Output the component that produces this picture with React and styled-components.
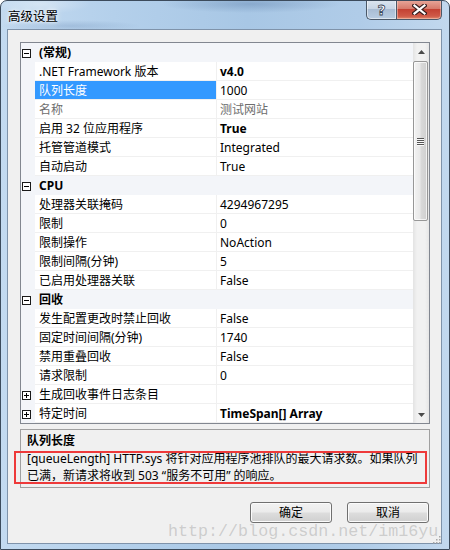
import React from 'react';
import styled, { createGlobalStyle } from 'styled-components';

const sections = [
    {
        title: '(常规)',
        items: [
            { name: '.NET Framework 版本', value: 'v4.0', bold: true },
            { name: '队列长度', value: '1000', selected: true },
            { name: '名称', value: '测试网站', disabled: true },
            { name: '启用 32 位应用程序', value: 'True', bold: true },
            { name: '托管管道模式', value: 'Integrated' },
            { name: '自动启动', value: 'True' },
        ],
    },
    {
        title: 'CPU',
        items: [
            { name: '处理器关联掩码', value: '4294967295' },
            { name: '限制', value: '0' },
            { name: '限制操作', value: 'NoAction' },
            { name: '限制间隔(分钟)', value: '5' },
            { name: '已启用处理器关联', value: 'False' },
        ],
    },
    {
        title: '回收',
        items: [
            { name: '发生配置更改时禁止回收', value: 'False' },
            { name: '固定时间间隔(分钟)', value: '1740' },
            { name: '禁用重叠回收', value: 'False' },
            { name: '请求限制', value: '0' },
            { name: '生成回收事件日志条目', value: '', expandable: true },
            { name: '特定时间', value: 'TimeSpan[] Array', bold: true, expandable: true },
        ],
    },
];

const Expander = ({ open }) => (
    <svg width="9" height="9" viewBox="0 0 9 9">
        <rect x="0.5" y="0.5" width="8" height="8" fill="#fff" stroke="#1a1a1a" />
        <line x1="2" y1="4.5" x2="7" y2="4.5" stroke="#000" />
        {!open && <line x1="4.5" y1="2" x2="4.5" y2="7" stroke="#000" />}
    </svg>
);

const Arrow = ({ down }) => (
    <svg width="7" height="4" viewBox="0 0 7 4">
        <polygon points={down ? '0,0 7,0 3.5,4' : '0,4 7,4 3.5,0'} fill="#4a4a4a" />
    </svg>
);

const App = () => {
    return (
        <>
            <GlobalStyle />
            <Window>
                <TitleBar>
                    <Title>高级设置</Title>
                    <CaptionButtons>
                        <HelpButton>?</HelpButton>
                        <CloseButton>
                            <svg width="15" height="11" viewBox="0 0 15 11">
                                <path d="M2.5 1.5 L12.5 9.5 M12.5 1.5 L2.5 9.5" stroke="#3b2020" strokeWidth="4.5" strokeLinecap="square" />
                                <path d="M2.5 1.5 L12.5 9.5 M12.5 1.5 L2.5 9.5" stroke="#fff" strokeWidth="2.2" strokeLinecap="square" />
                            </svg>
                        </CloseButton>
                    </CaptionButtons>
                </TitleBar>
                <Client>
                    <Grid>
                        <GridBody>
                            {sections.map((section) => (
                                <React.Fragment key={section.title}>
                                    <CategoryRow>
                                        <Gutter><Expander open /></Gutter>
                                        <CategoryLabel>{section.title}</CategoryLabel>
                                    </CategoryRow>
                                    {section.items.map((item) => (
                                        <Row key={item.name}>
                                            <Gutter>{item.expandable && <Expander />}</Gutter>
                                            <NameCell $selected={item.selected} $disabled={item.disabled}>
                                                {item.name}
                                            </NameCell>
                                            <ValueCell $bold={item.bold} $disabled={item.disabled}>
                                                {item.value}
                                            </ValueCell>
                                        </Row>
                                    ))}
                                </React.Fragment>
                            ))}
                        </GridBody>
                        <Scrollbar>
                            <ArrowButton><Arrow /></ArrowButton>
                            <Track>
                                <Thumb>
                                    <Grip><i /><i /><i /><i /></Grip>
                                </Thumb>
                            </Track>
                            <ArrowButton><Arrow down /></ArrowButton>
                        </Scrollbar>
                    </Grid>
                    <Description>
                        <DescTitle>队列长度</DescTitle>
                        <DescText>
                            [queueLength] HTTP.sys 将针对应用程序池排队的最大请求数。如果队列<br />
                            已满，新请求将收到 503 “服务不可用” 的响应。
                        </DescText>
                        <Highlight />
                    </Description>
                    <ButtonRow>
                        <Button>确定</Button>
                        <Button>取消</Button>
                    </ButtonRow>
                    <SizeGrip>
                        <svg width="10" height="10" viewBox="0 0 10 10">
                            {[[8, 0], [8, 3], [5, 3], [8, 6], [5, 6], [2, 6]].map(([x, y]) => (
                                <rect key={`${x}-${y}`} x={x} y={y + 2} width="1.5" height="1.5" fill="#a8a8a8" />
                            ))}
                        </svg>
                    </SizeGrip>
                </Client>
                <Watermark>http://blog.csdn.net/im16yu</Watermark>
            </Window>
        </>
    );
};

export default App;

const GlobalStyle = createGlobalStyle`
    html, body {
        margin: 0;
        padding: 0;
        background: #ffffff;
    }
    body {
        font-family: "Noto Sans", "Noto Sans CJK SC", sans-serif;
        font-size: 12px;
        color: #000;
    }
`;

const Window = styled.div`
    position: relative;
    width: 450px;
    height: 550px;
    box-sizing: border-box;
    border: 1px solid #3c4b5c;
    border-radius: 7px 7px 0 0;
    overflow: hidden;
    display: flex;
    flex-direction: column;
    background:
        radial-gradient(ellipse 90px 9px at 250px 3px, rgba(80, 115, 160, 0.35), transparent),
        radial-gradient(ellipse 70px 6px at 70px 25px, rgba(90, 125, 170, 0.25), transparent),
        radial-gradient(ellipse 50px 10px at 40px 3px, rgba(255, 255, 255, 0.35), transparent),
        linear-gradient(to right, #c3daf0 0%, #b4d0eb 25%, #a8c7e5 55%, #b0cce8 80%, #c2d8ee 100%);
`;

const TitleBar = styled.div`
    height: 28px;
    flex: none;
    display: flex;
    justify-content: space-between;
    align-items: flex-start;
    padding: 0 7px 0 7px;
`;

const Title = styled.div`
    padding-top: 7px;
    line-height: 18px;
    font-size: 12.5px;
    text-shadow: 0 0 6px rgba(255, 255, 255, 0.9), 0 0 3px rgba(255, 255, 255, 0.9);
`;

const CaptionButtons = styled.div`
    display: flex;
    margin-top: -1px;
`;

const CaptionButton = styled.div`
    height: 20px;
    box-sizing: border-box;
    border: 1px solid #4a5868;
    border-top: none;
    display: flex;
    align-items: center;
    justify-content: center;
`;

const HelpButton = styled(CaptionButton)`
    width: 30px;
    border-radius: 0 0 0 5px;
    border-right: none;
    background: linear-gradient(#dde6f0 0%, #c8d6e6 45%, #a9bdd4 50%, #b9cde2 100%);
    box-shadow: inset 0 0 0 1px rgba(255, 255, 255, 0.5);
    color: #fff;
    font-family: "DejaVu Sans", sans-serif;
    font-weight: bold;
    font-size: 14px;
    -webkit-text-stroke: 0.8px #3a4656;
`;

const CloseButton = styled(CaptionButton)`
    width: 46px;
    border-radius: 0 0 5px 0;
    background: linear-gradient(#e9a99c 0%, #d77b6c 45%, #c44233 50%, #cf5a48 85%, #e08a6c 100%);
    box-shadow: inset 0 0 0 1px rgba(255, 220, 210, 0.45);
`;

const Client = styled.div`
    position: relative;
    flex: none;
    height: 515px;
    margin: 0 7px 0 6px;
    box-sizing: border-box;
    border: 1px solid #7f93aa;
    background: #f0f0f0;
    padding: 12px 11px 0 12px;
    display: flex;
    flex-direction: column;
`;

const Grid = styled.div`
    height: 382px;
    box-sizing: border-box;
    border: 1px solid #828790;
    background: #ffffff;
    display: flex;
    overflow: hidden;
`;

const GridBody = styled.div`
    flex: 1;
    display: flex;
    flex-direction: column;
`;

const Row = styled.div`
    display: flex;
    height: 19px;
    flex: none;
`;

const CategoryRow = styled(Row)`
    background: #f3f5f9;
`;

const Gutter = styled.div`
    width: 14px;
    flex: none;
    box-sizing: border-box;
    padding: 1px 0 0 1px;
    background: #f3f5f9;
    display: flex;
    align-items: center;
`;

const CategoryLabel = styled.div`
    flex: 1;
    padding: 2px 0 0 4px;
    line-height: 16px;
    font-weight: bold;
`;

const NameCell = styled.div`
    width: 182px;
    height: 19px;
    flex: none;
    box-sizing: border-box;
    padding: 2px 0 0 4px;
    line-height: 16px;
    white-space: nowrap;
    border-right: 1px solid #f0f0f0;
    border-bottom: 1px solid #f0f0f0;
    background: ${(p) => (p.$selected ? '#3399ff' : 'transparent')};
    color: ${(p) => (p.$selected ? '#ffffff' : p.$disabled ? '#6d6d6d' : '#000000')};
`;

const ValueCell = styled.div`
    flex: 1;
    height: 19px;
    box-sizing: border-box;
    padding: 2px 0 0 3px;
    line-height: 16px;
    white-space: nowrap;
    border-bottom: 1px solid #f0f0f0;
    font-weight: ${(p) => (p.$bold ? 'bold' : 'normal')};
    color: ${(p) => (p.$disabled ? '#6d6d6d' : '#000000')};
`;

const Scrollbar = styled.div`
    width: 16px;
    flex: none;
    display: flex;
    flex-direction: column;
    background: linear-gradient(to right, #e3e3e3 0%, #f1f1f1 25%, #f1f1f1 75%, #e6e6e6 100%);
`;

const ArrowButton = styled.div`
    height: 17px;
    flex: none;
    display: flex;
    align-items: center;
    justify-content: center;
    padding-left: 1px;
`;

const Track = styled.div`
    flex: 1;
    padding-top: 1px;
`;

const Thumb = styled.div`
    width: 15px;
    height: 160px;
    box-sizing: border-box;
    border: 1px solid #979797;
    border-radius: 2px;
    background: linear-gradient(to right, #f3f3f3 0%, #e9e9e9 45%, #d9d9d9 55%, #cfcfcf 100%);
    box-shadow: inset 0 0 0 1px rgba(255, 255, 255, 0.7);
    display: flex;
    align-items: center;
    justify-content: center;
`;

const Grip = styled.div`
    display: flex;
    flex-direction: column;
    gap: 1px;

    i {
        display: block;
        width: 7px;
        height: 1px;
        background: #555;
        box-shadow: 0 1px 0 #fafafa;
    }
`;

const Description = styled.div`
    position: relative;
    height: 59px;
    margin-top: 5px;
    box-sizing: border-box;
    border: 1px solid #a0a0a0;
    padding: 2px 6px 0;
`;

const DescTitle = styled.div`
    font-weight: bold;
    line-height: 18px;
`;

const DescText = styled.div`
    line-height: 16.5px;
    white-space: nowrap;
    margin-top: 1px;
`;

const Highlight = styled.div`
    position: absolute;
    left: -7px;
    top: 21px;
    width: 413px;
    height: 33px;
    box-sizing: border-box;
    border: 2px solid #ee3a3a;
`;

const ButtonRow = styled.div`
    display: flex;
    justify-content: flex-end;
    gap: 15px;
    margin-top: 14px;
    padding-right: 1px;
`;

const Button = styled.div`
    width: 82px;
    height: 21px;
    box-sizing: border-box;
    border: 1px solid #707070;
    border-radius: 3px;
    background: linear-gradient(#f2f2f2 0%, #ebebeb 48%, #dddddd 52%, #cfcfcf 100%);
    box-shadow: inset 0 0 0 1px #fbfbfb;
    display: flex;
    align-items: center;
    justify-content: center;
    line-height: 18px;
    padding-top: 1px;
`;

const SizeGrip = styled.div`
    position: absolute;
    right: 0;
    bottom: 0;
    width: 10px;
    height: 12px;
`;

const Watermark = styled.div`
    position: absolute;
    left: 167px;
    top: 523px;
    font-family: "Liberation Mono", monospace;
    font-size: 16.7px;
    line-height: 16px;
    color: rgba(160, 160, 160, 0.45);
    white-space: nowrap;
    pointer-events: none;
`;
